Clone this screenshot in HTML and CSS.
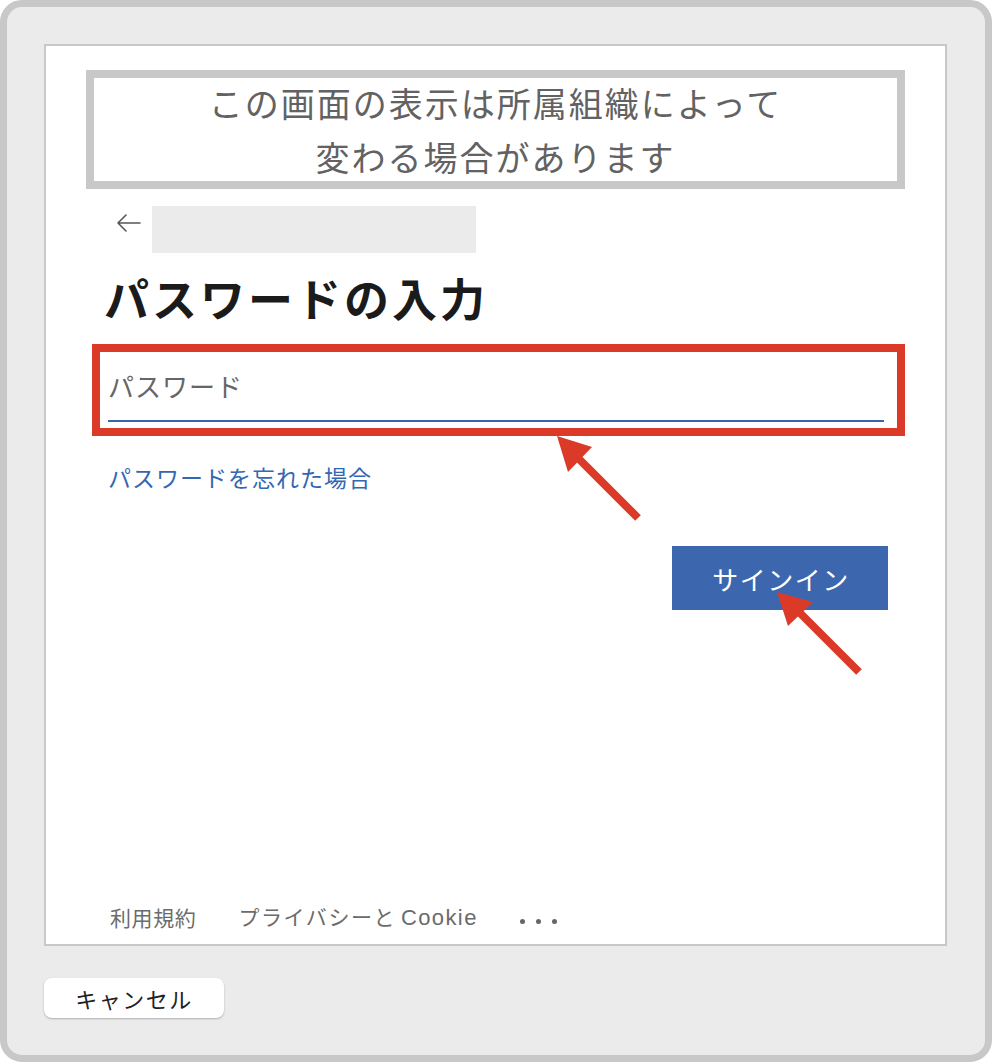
FILE: index.html
```html
<!DOCTYPE html>
<html lang="ja">
<head>
<meta charset="utf-8">
<link rel="stylesheet" href="styles.css">
</head>
<body>
<div class="stage">
  <div class="window">
    <div class="panel">
      <div class="notice">
        <div class="notice-text">
          <div>この画面の表示は所属組織によって</div>
          <div>変わる場合があります</div>
        </div>
      </div>
      <div class="content">
        <div class="back-row">
          <svg class="back-icon" width="26" height="24" viewBox="0 0 26 24">
            <path d="M2 12 H24 M2 12 L10 4 M2 12 L10 20" fill="none" stroke="#555" stroke-width="1.6" stroke-linecap="round" stroke-linejoin="round"/>
          </svg>
          <div class="account-box"></div>
        </div>
        <h1 class="title">パスワードの入力</h1>
        <div class="highlight">
          <div class="pw-input">パスワード</div>
        </div>
        <a class="forgot">パスワードを忘れた場合</a>
        <div class="actions">
          <div class="signin">サインイン</div>
        </div>
      </div>
      <div class="footer">
        <span class="foot-item terms">利用規約</span>
        <span class="foot-item privacy"><span class="kana">プライバシーと</span> <span class="latin">Cookie</span></span>
        <span class="foot-dots"><i></i><i></i><i></i></span>
      </div>
    </div>
    <div class="cancel">キャンセル</div>
  </div>
  <svg class="arrows" width="992" height="1062" viewBox="0 0 992 1062">
    <line x1="638" y1="518" x2="575" y2="455" stroke="#db3a28" stroke-width="8"/>
    <polygon points="557,436 592,447 568,472" fill="#db3a28"/>
    <line x1="859" y1="672" x2="797" y2="610" stroke="#db3a28" stroke-width="8"/>
    <polygon points="777,592 813,602 788,626" fill="#db3a28"/>
  </svg>
</div>
</body>
</html>
```

FILE: styles.css
```css
* { box-sizing: border-box; }
html, body { margin: 0; padding: 0; background: #ffffff; }
body { font-family: "Noto Sans CJK JP", "Noto Sans", sans-serif; }

.stage { position: relative; width: 992px; height: 1062px; }

.window {
  width: 992px;
  height: 1062px;
  border: 7px solid #c8c8c8;
  border-radius: 22px;
  background: #ebebeb;
  padding: 37px 0 0 37px;
}

.panel {
  width: 903px;
  height: 902px;
  background: #ffffff;
  border: 2px solid #c8c8c8;
  display: flex;
  flex-direction: column;
}

.notice {
  margin: 24px 0 0 40px;
  width: 819px;
  height: 119px;
  border: 8px solid #c8c8c8;
  display: flex;
  align-items: center;
  justify-content: center;
}
.notice-text {
  color: #626262;
  font-size: 34px;
  line-height: 54px;
  text-align: center;
  letter-spacing: 2px;
}

.content { margin-left: 46px; display: flex; flex-direction: column; }

.back-row { margin-top: 17px; height: 47px; display: flex; align-items: flex-start; }
.back-icon { margin: 5px 0 0 24px; }
.account-box { margin-left: 10px; width: 324px; height: 47px; background: #ebebeb; }

.title {
  margin: 17px 0 0 12px;
  font-size: 45px;
  line-height: 56px;
  font-weight: 700;
  color: #1b1b1b;
  letter-spacing: 3px;
}

.highlight {
  margin-top: 18px;
  width: 813px;
  height: 92px;
  border: 8px solid #db3a28;
}
.pw-input {
  margin-left: 8px;
  width: 776px;
  height: 70px;
  border-bottom: 2px solid #3a65ae;
  color: #666666;
  font-size: 26px;
  line-height: 68px;
  letter-spacing: 1px;
}

.forgot {
  margin: 26px 0 0 16px;
  color: #3366b3;
  font-size: 23px;
  line-height: 30px;
  letter-spacing: 1px;
}

.actions { margin-top: 54px; display: flex; justify-content: flex-end; padding-right: 57px; }
.signin {
  width: 216px;
  height: 64px;
  background: #3c67af;
  color: #ffffff;
  font-size: 26px;
  display: flex;
  align-items: center;
  justify-content: center;
  letter-spacing: 1.5px;
  padding-left: 2px;
}

.footer {
  margin-top: auto;
  padding: 0 0 12px 64px;
  display: flex;
  align-items: center;
  color: #6b6b6b;
  font-size: 21px;
  line-height: 28px;
}
.terms { margin-right: 42px; letter-spacing: 0.6px; }
.privacy { margin-right: 42px; }
.kana { letter-spacing: 1.6px; }
.latin { font-family: "Liberation Sans", sans-serif; font-size: 22px; letter-spacing: 1.4px; }
.foot-dots { display: flex; gap: 11px; padding-top: 8px; }
.foot-dots i { display: block; width: 5px; height: 5px; border-radius: 50%; background: #666; }

.cancel {
  margin-top: 32px;
  width: 180px;
  height: 40px;
  background: #ffffff;
  border-radius: 8px;
  box-shadow: 0 1px 2px rgba(0,0,0,0.25);
  color: #222222;
  font-size: 22px;
  display: flex;
  align-items: center;
  justify-content: center;
  letter-spacing: 1.5px;
}

.arrows { position: absolute; top: 0; left: 0; pointer-events: none; }
```
